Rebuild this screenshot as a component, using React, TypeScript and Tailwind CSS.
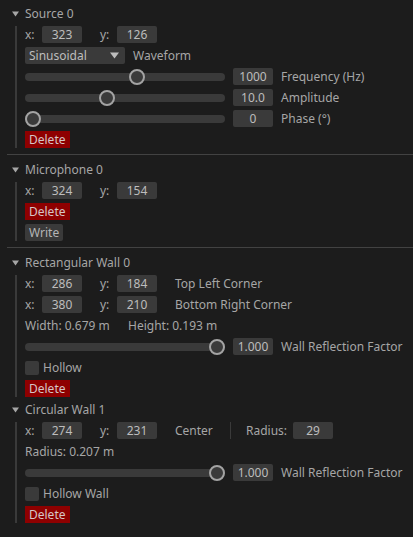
import React from 'react';

const BOX = 'bg-[#3a3a3a] rounded-[2px]';

function Caret() {
  return (
    <svg width="7" height="6" viewBox="0 0 7 6" className="shrink-0">
      <path d="M0 0.5 L7 0.5 L3.5 5.5 Z" fill="#a6a6a6" />
    </svg>
  );
}

function Header({ title }: { title: string }) {
  return (
    <div className="flex h-[17px] items-center pl-[12px]">
      <Caret />
      <span className="ml-[6px]">{title}</span>
    </div>
  );
}

function NumBox({ value }: { value: string }) {
  return (
    <div className={`${BOX} h-[17px] w-[40px] shrink-0 text-center text-[#bdbdbd]`}>{value}</div>
  );
}

function XY({ x, y, label }: { x: string; y: string; label?: string }) {
  return (
    <div className="flex h-[17px] items-center">
      <span className="w-[17px] shrink-0">x:</span>
      <NumBox value={x} />
      <span className="ml-[18px] w-[17px] shrink-0">y:</span>
      <NumBox value={y} />
      {label && <span className="ml-[18px]">{label}</span>}
    </div>
  );
}

function Slider({ value, frac, label }: { value: string; frac: number; label: string }) {
  return (
    <div className="flex h-[17px] items-center">
      <div className="relative h-[8px] w-[200px] shrink-0 rounded-full bg-[#3a3a3a]">
        <div
          className="absolute top-[-4px] h-[16px] w-[16px] rounded-full border-2 border-[#a3a3a3] bg-[#3a3a3a]"
          style={{ left: `${frac * 184}px` }}
        />
      </div>
      <div className="ml-[8px]">
        <NumBox value={value} />
      </div>
      <span className="ml-[8px] whitespace-nowrap">{label}</span>
    </div>
  );
}

function Button({ text, red }: { text: string; red?: boolean }) {
  return (
    <div className="flex">
      <div
        className={`h-[17px] px-[4px] ${
          red ? 'bg-[#8e0000] text-[#d6c6c6]' : 'bg-[#3a3a3a] rounded-[2px] text-[#b5b5b5]'
        }`}
      >
        {text}
      </div>
    </div>
  );
}

function Check({ label }: { label: string }) {
  return (
    <div className="flex h-[17px] items-center">
      <div className={`${BOX} h-[14px] w-[14px]`} />
      <span className="ml-[4px]">{label}</span>
    </div>
  );
}

function Body({ children }: { children: React.ReactNode }) {
  return (
    <div className="ml-[15px] flex flex-col gap-[4px] border-l-2 border-[#3a3a3a] pl-[8px]">
      {children}
    </div>
  );
}

function Separator() {
  return (
    <div className="ml-[7px] flex h-[5px] items-center">
      <div className="h-px w-full bg-[#424242]" />
    </div>
  );
}

export default function App() {
  return (
    <div className="min-h-screen w-[413px] bg-[#1c1c1c] pt-[5px] font-['Noto_Sans',sans-serif] text-[12px] leading-[17px] text-[#a6a6a6]">
      <div className="flex flex-col gap-[4px]">
        <Header title="Source 0" />
        <Body>
          <XY x="323" y="126" />
          <div className="flex h-[17px] items-center">
            <div className={`${BOX} flex h-[17px] w-[100px] items-center justify-between pl-[4px] pr-[6px] text-[#bdbdbd]`}>
              <span>Sinusoidal</span>
              <svg width="9" height="7" viewBox="0 0 9 7">
                <path d="M0 0.5 L9 0.5 L4.5 6.5 Z" fill="#bdbdbd" />
              </svg>
            </div>
            <span className="ml-[8px]">Waveform</span>
          </div>
          <Slider value="1000" frac={0.565} label="Frequency (Hz)" />
          <Slider value="10.0" frac={0.4} label="Amplitude" />
          <Slider value="0" frac={0} label="Phase (°)" />
          <Button text="Delete" red />
        </Body>
        <Separator />
        <Header title="Microphone 0" />
        <Body>
          <XY x="324" y="154" />
          <Button text="Delete" red />
          <Button text="Write" />
        </Body>
        <Separator />
        <Header title="Rectangular Wall 0" />
        <Body>
          <XY x="286" y="184" label="Top Left Corner" />
          <XY x="380" y="210" label="Bottom Right Corner" />
          <div className="flex h-[17px] items-center">
            <span className="w-[103px] shrink-0">Width: 0.679 m</span>
            <span>Height: 0.193 m</span>
          </div>
          <Slider value="1.000" frac={1} label="Wall Reflection Factor" />
          <Check label="Hollow" />
          <Button text="Delete" red />
        </Body>
        <Header title="Circular Wall 1" />
        <Body>
          <div className="flex h-[17px] items-center">
            <span className="w-[17px] shrink-0">x:</span>
            <NumBox value="274" />
            <span className="ml-[18px] w-[17px] shrink-0">y:</span>
            <NumBox value="231" />
            <span className="ml-[18px] w-[55px] shrink-0">Center</span>
            <div className="h-[17px] w-px bg-[#3a3a3a]" />
            <span className="ml-[15px] w-[47px] shrink-0">Radius:</span>
            <NumBox value="29" />
          </div>
          <div className="flex h-[17px] items-center">Radius: 0.207 m</div>
          <Slider value="1.000" frac={1} label="Wall Reflection Factor" />
          <Check label="Hollow Wall" />
          <Button text="Delete" red />
        </Body>
      </div>
    </div>
  );
}
